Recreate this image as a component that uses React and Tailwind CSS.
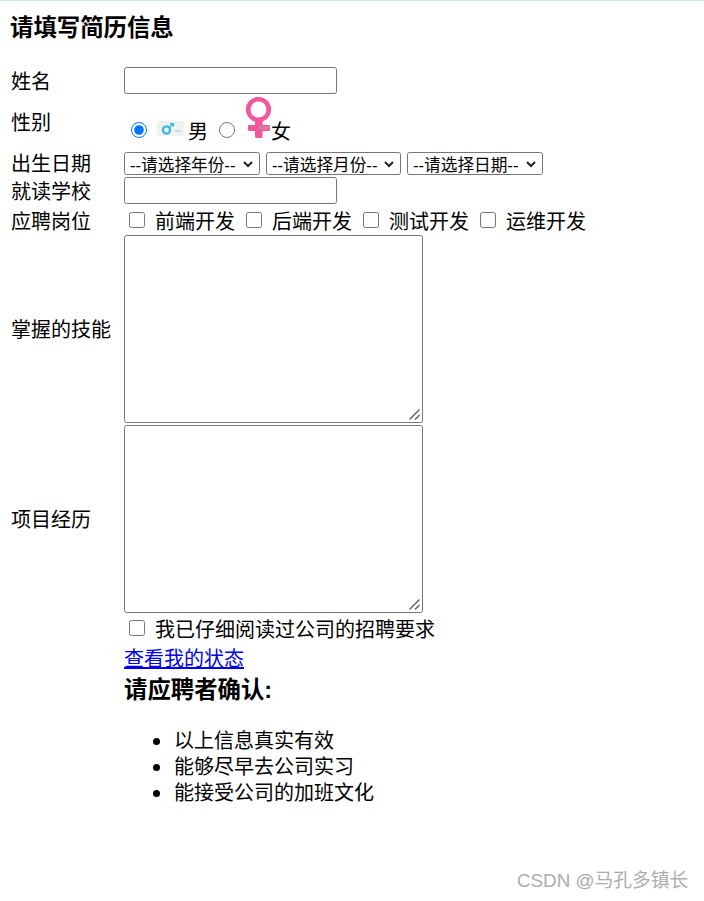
const ctl = "block border border-[#767676] rounded-[2.5px] bg-white";
const cb = "w-4 h-4 m-0 shrink-0";

function Male() {
  return (
    <svg width="27" height="16" viewBox="0 0 27 16" className="block shrink-0">
      <rect width="27" height="15" fill="#eef3f1" />
      <circle cx="9.5" cy="9" r="3.6" fill="none" stroke="#3cbcd4" strokeWidth="2.4" />
      <path d="M12 6.5 L16 3 M13 2.8 H16.4 V5.6" fill="none" stroke="#3cbcd4" strokeWidth="1.4" />
      <rect x="18" y="9.5" width="6" height="1.4" fill="#c8cccc" />
    </svg>
  );
}

function Female() {
  return (
    <svg width="27" height="42" viewBox="0 0 27 42" className="block shrink-0">
      <circle cx="13.5" cy="12.5" r="10.3" fill="none" stroke="#f4579d" strokeWidth="4.6" />
      <rect x="10" y="22" width="7.5" height="19" rx="1.5" fill="#f4579d" />
      <rect x="3" y="28" width="22" height="6" rx="1" fill="#f4579d" />
      <rect x="13" y="29" width="11" height="3.5" fill="#d97aa8" />
    </svg>
  );
}

function Row({ label, className, children }) {
  return (
    <div className={"grid grid-cols-[113px_1fr] items-center " + className}>
      <div className="translate-y-[1px]">{label}</div>
      <div className="flex items-center">{children}</div>
    </div>
  );
}

function Check({ text, className = "" }) {
  return (
    <label className={"flex items-center " + className}>
      <input type="checkbox" className={cb + " -translate-y-[1px]"} />
      <span className="ml-[10px] translate-y-[1px]">{text}</span>
    </label>
  );
}

function Area() {
  return (
    <div className="relative w-[299px] h-[188px]">
      <textarea className={ctl + " w-full h-full resize-none"} />
      <svg width="11" height="11" viewBox="0 0 11 11" className="absolute right-[3px] bottom-[3px]">
        <path d="M0.5 10.5 L10.5 0.5 M6 10.5 L10.5 6" stroke="#555" strokeWidth="1.2" fill="none" />
      </svg>
    </div>
  );
}

function Pick({ text, className }) {
  return (
    <div className={"relative h-[23px] " + className}>
      <select className="block appearance-none w-full h-full border border-[#767676] rounded-[2.5px] bg-white text-[16.67px] pl-[5px]">
        <option>{text}</option>
      </select>
      <svg width="10" height="7" viewBox="0 0 10 7" className="absolute right-[7px] top-[9px] pointer-events-none">
        <path d="M1 1 L5 5 L9 1" stroke="#222" strokeWidth="2" fill="none" />
      </svg>
    </div>
  );
}

export default function App() {
  return (
    <div className="w-[704px] h-[901px] relative bg-white text-black text-[20px] leading-[26px] font-['Liberation_Sans','Noto_Sans_CJK_SC',sans-serif] overflow-hidden">
      <div className="h-px bg-[#c9f2ea]" />
      <div className="pl-[11px]">
        <h3 className="text-[23.4px] font-bold leading-[27px] pt-[14px] -ml-px">请填写简历信息</h3>

        <Row label="姓名" className="mt-[25px] h-[27px]">
          <input type="text" className={ctl + " w-[213px] h-[27px]"} />
        </Row>

        <Row label="性别" className="mt-[2px] h-[52px]">
          <div className="flex items-end h-[52px] pb-[8px]">
            <input type="radio" name="sex" defaultChecked className={cb + " ml-[7px] mb-[2px]"} />
            <span className="ml-[10px] mb-[3px]"><Male /></span>
            <span className="ml-[4px] leading-[24px] -mb-[4px]">男</span>
            <input type="radio" name="sex" className={cb + " ml-[11px] mb-[2px]"} />
            <span className="ml-[10px] mb-[1px]"><Female /></span>
            <span className="-ml-px leading-[24px] -mb-[4px]">女</span>
          </div>
        </Row>

        <Row label="出生日期" className="mt-[2px] h-[24px]">
          <div className="flex gap-[6px] self-start">
            <Pick text="--请选择年份--" className="w-[136px]" />
            <Pick text="--请选择月份--" className="w-[135px]" />
            <Pick text="--请选择日期--" className="w-[136px]" />
          </div>
        </Row>

        <Row label="就读学校" className="mt-[3px] h-[27px]">
          <input type="text" className={ctl + " w-[213px] h-[27px]"} />
        </Row>

        <Row label="应聘岗位" className="mt-[2px] h-[29px]">
          <div className="flex items-center pl-[5px]">
            <Check text="前端开发" />
            <Check text="后端开发" className="ml-[11px]" />
            <Check text="测试开发" className="ml-[11px]" />
            <Check text="运维开发" className="ml-[11px]" />
          </div>
        </Row>

        <Row label="掌握的技能" className="h-[188px]">
          <Area />
        </Row>

        <Row label="项目经历" className="mt-[2px] h-[188px]">
          <Area />
        </Row>

        <div className="ml-[113px] mt-[3px] h-[26px] flex items-center pl-[5px]">
          <Check text="我已仔细阅读过公司的招聘要求" />
        </div>

        <div className="ml-[113px] mt-[4px] h-[26px]">
          <a href="#" className="text-[#0000ee] underline">查看我的状态</a>
        </div>

        <h3 className="ml-[113px] mt-[5px] text-[23.4px] font-bold leading-[27px]">请应聘者确认:</h3>

        <ul className="ml-[142px] mt-[24px]">
          {["以上信息真实有效", "能够尽早去公司实习", "能接受公司的加班文化"].map((t) => (
            <li key={t} className="flex items-center gap-[14px]">
              <span className="w-[7px] h-[7px] rounded-full bg-black shrink-0" />
              <span>{t}</span>
            </li>
          ))}
        </ul>
      </div>

      <div className="absolute left-[517px] top-[868px] text-[18.8px] leading-[26px] text-[#adadad] whitespace-nowrap">CSDN @马孔多镇长</div>
    </div>
  );
}
